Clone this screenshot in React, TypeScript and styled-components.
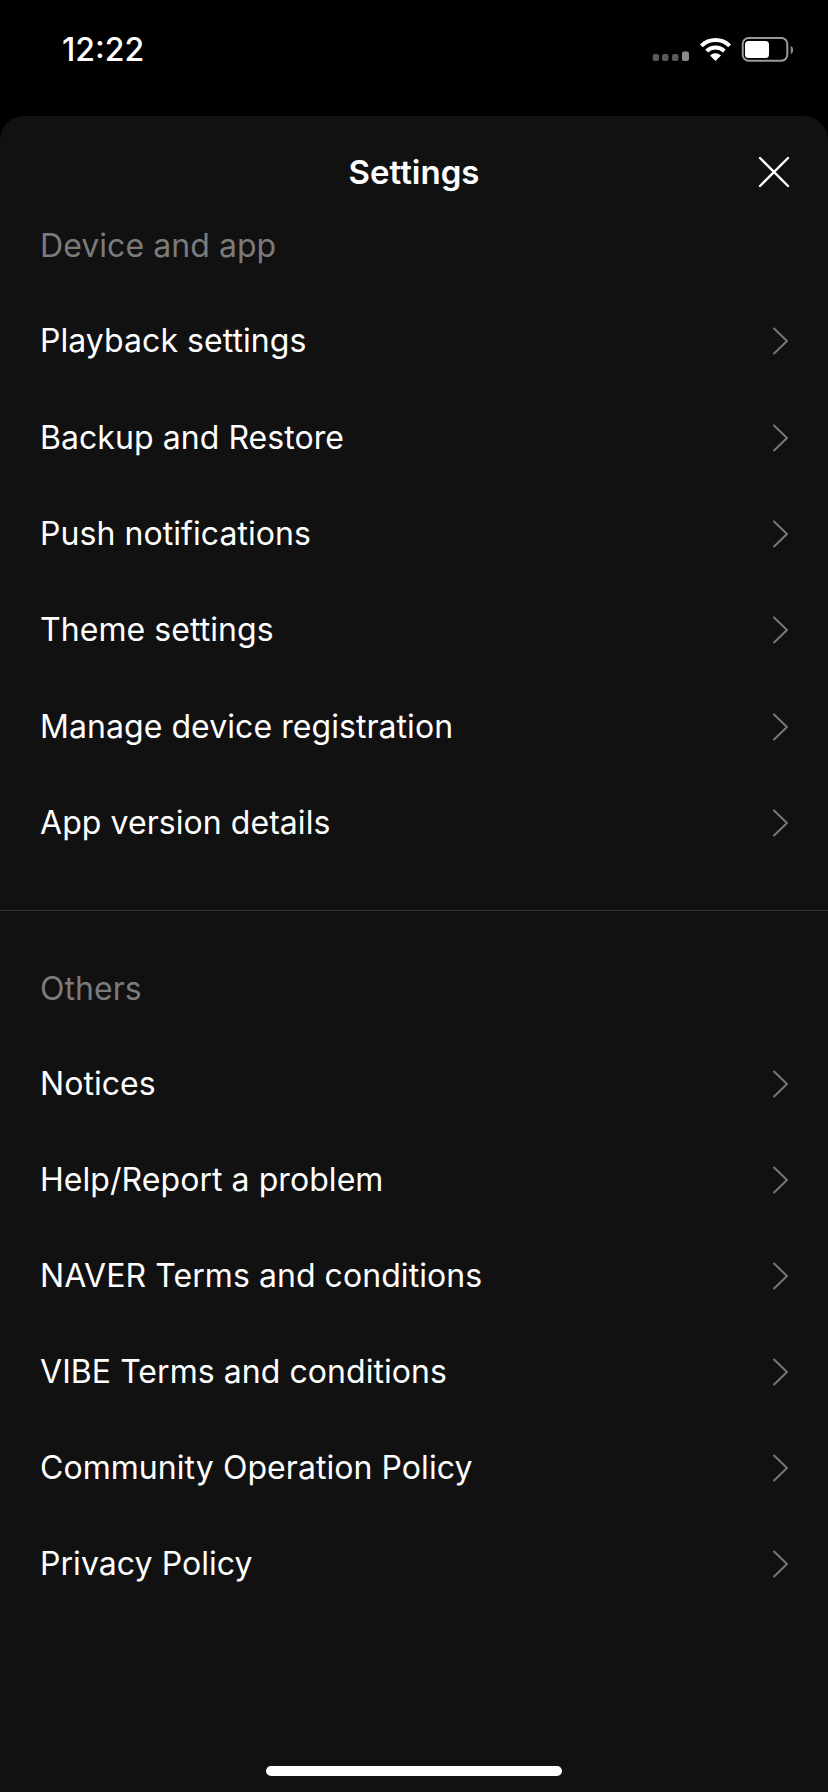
import styled, { createGlobalStyle } from 'styled-components'

const GlobalStyle = createGlobalStyle`
  html, body { margin: 0; padding: 0; background: #000; }
  body { font-family: Inter, "Liberation Sans", sans-serif; -webkit-font-smoothing: antialiased; }
`

const Screen = styled.div`
  width: 828px;
  height: 1792px;
  background: #000;
  display: flex;
  flex-direction: column;
  overflow: hidden;
`

const StatusBar = styled.div`
  height: 116px;
  flex: none;
  box-sizing: border-box;
  padding: 30px 32px 0 62px;
  display: flex;
  justify-content: space-between;
  align-items: flex-start;
`

const Clock = styled.div`
  color: #fff;
  font-size: 32px;
  line-height: 40px;
  font-weight: 500;
`

const StatusIcons = styled.div`
  display: flex;
  align-items: center;
  padding-top: 6px;
`

const Sheet = styled.div`
  flex: 1;
  position: relative;
  background: #111;
  border-radius: 24px 24px 0 0;
  display: flex;
  flex-direction: column;
`

const Header = styled.div`
  height: 110px;
  flex: none;
  position: relative;
  display: flex;
  justify-content: center;
  box-sizing: border-box;
  padding-top: 33px;
`

const Title = styled.div`
  color: #fff;
  font-size: 33px;
  line-height: 46px;
  font-weight: 600;
`

const CloseButton = styled.button`
  position: absolute;
  top: 40px;
  right: 38px;
  width: 32px;
  height: 32px;
  padding: 0;
  border: 0;
  background: none;
  display: block;
`

const SectionLabel = styled.div`
  color: #7b7b7b;
  font-size: 32px;
  line-height: 40px;
  padding: 0 40px;
  font-weight: 380;
  letter-spacing: 0.06px;
`

const Rows = styled.div`
  display: flex;
  flex-direction: column;
  padding-top: 27px;
`

const Row = styled.div<{ $pitch: number }>`
  height: ${(p) => p.$pitch}px;
  box-sizing: border-box;
  padding: 0 38px 0 40px;
  display: flex;
  align-items: center;
  justify-content: space-between;
`

const RowLabel = styled.span`
  color: #fff;
  font-size: 32px;
  line-height: 40px;
  font-weight: 380;
  letter-spacing: 0.06px;
`

const Divider = styled.div`
  height: 1px;
  background: #303030;
  margin-top: 39px;
  margin-bottom: 58px;
`

const HomeIndicator = styled.div`
  position: absolute;
  left: 266px;
  bottom: 16px;
  width: 296px;
  height: 10px;
  border-radius: 5px;
  background: #fff;
`

function Chevron() {
  return (
    <svg width="18" height="28" viewBox="0 0 18 28" fill="none">
      <path d="M2 1.5 L15 14 L2 26.5" stroke="#777" strokeWidth="2" strokeLinecap="round" strokeLinejoin="round" />
    </svg>
  )
}

const deviceItems = [
  'Playback settings',
  'Backup and Restore',
  'Push notifications',
  'Theme settings',
  'Manage device registration',
  'App version details',
]

const otherItems = [
  'Notices',
  'Help/Report a problem',
  'NAVER Terms and conditions',
  'VIBE Terms and conditions',
  'Community Operation Policy',
  'Privacy Policy',
]

export default function App() {
  return (
    <Screen>
      <GlobalStyle />
      <StatusBar>
        <Clock>12:22</Clock>
        <StatusIcons>
          <svg width="144" height="28" viewBox="0 0 144 28" fill="none">
            <rect x="0.7" y="18" width="6.5" height="7" rx="2" fill="#5a5a5a" />
            <rect x="10" y="18" width="6.5" height="7" rx="2" fill="#5a5a5a" />
            <rect x="20" y="18" width="6.5" height="7" rx="2" fill="#5a5a5a" />
            <rect x="30" y="15.5" width="7" height="9.5" rx="2" fill="#8a8a8a" />
            <path d="M49.4 9.9 A20 20 0 0 1 77.6 9.9" stroke="#fff" strokeWidth="4" />
            <path d="M54.7 15.2 A12.5 12.5 0 0 1 72.3 15.2" stroke="#fff" strokeWidth="4" />
            <path d="M63.5 25 L58 19.5 A7.8 7.8 0 0 1 69 19.5 Z" fill="#fff" />
            <rect x="90.7" y="2" width="44.6" height="22.7" rx="6" stroke="#9a9a9a" strokeWidth="2" />
            <rect x="93" y="5" width="24" height="17" rx="3.5" fill="#fff" />
            <path d="M138.7 10 C142 11 142 17 138.7 18 Z" fill="#8a8a8a" />
          </svg>
        </StatusIcons>
      </StatusBar>
      <Sheet>
        <Header>
          <Title>Settings</Title>
          <CloseButton aria-label="Close">
            <svg width="32" height="32" viewBox="0 0 32 32" fill="none">
              <path d="M2 2 L30 30 M30 2 L2 30" stroke="#fff" strokeWidth="2.4" strokeLinecap="round" />
            </svg>
          </CloseButton>
        </Header>
        <SectionLabel>Device and app</SectionLabel>
        <Rows>
          {deviceItems.map((item) => (
            <Row key={item} $pitch={96.4}>
              <RowLabel>{item}</RowLabel>
              <Chevron />
            </Row>
          ))}
        </Rows>
        <Divider />
        <SectionLabel>Others</SectionLabel>
        <Rows>
          {otherItems.map((item) => (
            <Row key={item} $pitch={96}>
              <RowLabel>{item}</RowLabel>
              <Chevron />
            </Row>
          ))}
        </Rows>
        <HomeIndicator />
      </Sheet>
    </Screen>
  )
}
